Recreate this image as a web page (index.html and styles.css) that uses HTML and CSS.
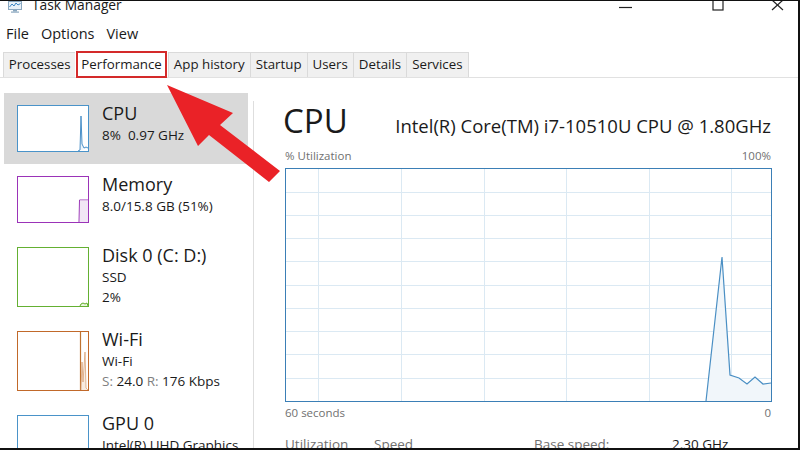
FILE: index.html
```html
<!DOCTYPE html>
<html>
<head>
<meta charset="utf-8">
<link rel="stylesheet" href="styles.css">
</head>
<body>
<div class="window">
  <div class="titlebar">
    <svg class="appicon" width="14" height="12" viewBox="0 0 14 12"><rect x="0.5" y="0.5" width="13" height="8" fill="#e8f1f8" stroke="#8aa7bf"/><polyline points="1.5,6 4,3 6,5 8,2 10,4 12.5,2.5" fill="none" stroke="#3b86c4" stroke-width="1"/><rect x="5" y="9" width="4" height="1.5" fill="#8aa7bf"/><rect x="3" y="10.5" width="8" height="1.2" fill="#8aa7bf"/></svg>
    <span class="title">Task Manager</span>
    <div class="controls">
      <span class="ctl min"><svg width="13" height="10" viewBox="0 0 13 10"><line x1="0" y1="6.5" x2="13" y2="6.5" stroke="#222" stroke-width="1.2"/></svg></span>
      <span class="ctl max"><svg width="12" height="12" viewBox="0 0 12 12"><rect x="1" y="-2" width="10" height="11" fill="none" stroke="#222" stroke-width="1.2"/></svg></span>
      <span class="ctl close"><svg width="14" height="10" viewBox="0 0 14 10"><line x1="1" y1="-1" x2="12" y2="9" stroke="#222" stroke-width="1.2"/><line x1="12" y1="-1" x2="1" y2="9" stroke="#222" stroke-width="1.2"/></svg></span>
    </div>
  </div>
  <div class="menubar">
    <span class="menu">File</span>
    <span class="menu">Options</span>
    <span class="menu">View</span>
  </div>
  <div class="tabs">
    <span class="tab">Processes</span>
    <span class="tab active">Performance</span>
    <span class="tab">App history</span>
    <span class="tab">Startup</span>
    <span class="tab">Users</span>
    <span class="tab">Details</span>
    <span class="tab">Services</span>
  </div>
  <div class="content">
    <div class="sidebar">
      <div class="item selected">
        <div class="thumb cpu short">
          <svg viewBox="0 0 70 45" preserveAspectRatio="none"><polyline points="60,45 62,44 63,10 64,38 66,42 68,41 70,42" fill="#eef5fb" stroke="#4a90c8" stroke-width="1"/></svg>
        </div>
        <div class="info">
          <div class="name">CPU</div>
          <div class="sub">8%&nbsp; 0.97 GHz</div>
        </div>
      </div>
      <div class="item">
        <div class="thumb mem short">
          <svg viewBox="0 0 70 45" preserveAspectRatio="none"><polyline points="61,45 61.5,23 70,23" fill="none" stroke="#9c3ab8" stroke-width="1"/><rect x="62" y="23.5" width="8" height="21.5" fill="#f1e6f5"/></svg>
        </div>
        <div class="info">
          <div class="name">Memory</div>
          <div class="sub">8.0/15.8 GB (51%)</div>
        </div>
      </div>
      <div class="item">
        <div class="thumb disk">
          <svg viewBox="0 0 70 58" preserveAspectRatio="none"><polyline points="62,58 63,56 65,55 67,56 69,55 70,58" fill="#e9f5df" stroke="#60ad28" stroke-width="1"/></svg>
        </div>
        <div class="info">
          <div class="name">Disk 0 (C: D:)</div>
          <div class="sub">SSD</div>
          <div class="sub">2%</div>
        </div>
      </div>
      <div class="item">
        <div class="thumb wifi">
          <svg viewBox="0 0 70 58" preserveAspectRatio="none"><line x1="62.5" y1="0" x2="62.5" y2="58" stroke="#c0722f" stroke-width="1.2"/><polyline points="63,58 64,30 65,50 67,20 68,56 70,58" fill="#f8ebe0" stroke="#d9a37a" stroke-width="0.8"/></svg>
        </div>
        <div class="info">
          <div class="name">Wi-Fi</div>
          <div class="sub">Wi-Fi</div>
          <div class="sub"><span class="dim">S:</span> 24.0 <span class="dim">R:</span> 176 Kbps</div>
        </div>
      </div>
      <div class="item">
        <div class="thumb gpu"></div>
        <div class="info">
          <div class="name">GPU 0</div>
          <div class="sub">Intel(R) UHD Graphics</div>
        </div>
      </div>
    </div>
    <div class="divider"></div>
    <div class="main">
      <div class="header">
        <span class="big">CPU</span>
        <span class="model">Intel(R) Core(TM) i7-10510U CPU @ 1.80GHz</span>
      </div>
      <div class="axis top"><span>% Utilization</span><span>100%</span></div>
      <div class="graph">
        <svg width="485" height="232" viewBox="0 0 485 232">
          <g stroke="#dbe9f3" stroke-width="1">
            <line x1="32.5" y1="0" x2="32.5" y2="232"/>
            <line x1="115.5" y1="0" x2="115.5" y2="232"/>
            <line x1="198.5" y1="0" x2="198.5" y2="232"/>
            <line x1="280.5" y1="0" x2="280.5" y2="232"/>
            <line x1="363.5" y1="0" x2="363.5" y2="232"/>
            <line x1="445.5" y1="0" x2="445.5" y2="232"/>
            <line x1="0" y1="23.5" x2="485" y2="23.5"/>
            <line x1="0" y1="46.5" x2="485" y2="46.5"/>
            <line x1="0" y1="69.5" x2="485" y2="69.5"/>
            <line x1="0" y1="92.5" x2="485" y2="92.5"/>
            <line x1="0" y1="116.5" x2="485" y2="116.5"/>
            <line x1="0" y1="139.5" x2="485" y2="139.5"/>
            <line x1="0" y1="162.5" x2="485" y2="162.5"/>
            <line x1="0" y1="185.5" x2="485" y2="185.5"/>
            <line x1="0" y1="209.5" x2="485" y2="209.5"/>
          </g>
          <polygon points="420,232 436,88 444,206 453,209 461,215 469,208 477,215 485,214 485,232" fill="#f1f6fa"/>
          <polyline points="420,232 436,88 444,206 453,209 461,215 469,208 477,215 485,214" fill="none" stroke="#4a8fc4" stroke-width="1.2"/>
        </svg>
      </div>
      <div class="axis bottom"><span>60 seconds</span><span>0</span></div>
      <div class="stats">
        <span class="lbl l1">Utilization</span>
        <span class="lbl l2">Speed</span>
        <span class="lbl l3">Base speed:</span>
        <span class="val">2.30 GHz</span>
      </div>
    </div>
  </div>
  <svg class="arrow" width="800" height="450" viewBox="0 0 800 450">
    <polygon points="167,85 233,113 220,125 280,171 269,182 209,135 198,146" fill="#ea2227"/>
  </svg>
</div>
</body>
</html>
```
FILE: styles.css
```css
* { box-sizing: border-box; }
html, body { margin: 0; padding: 0; }
body {
  width: 800px;
  height: 450px;
  overflow: hidden;
  background: #fff;
  font-family: "Open Sans", "Noto Sans", sans-serif;
  color: #1a1a1a;
}
.window {
  position: relative;
  width: 800px;
  height: 450px;
  overflow: hidden;
  border-top: 1px solid #111;
  border-right: 2px solid #111;
  border-bottom: 2px solid #111;
  display: flex;
  flex-direction: column;
}
.titlebar {
  height: 15px;
  display: flex;
  align-items: flex-end;
  padding-left: 8px;
  overflow: hidden;
  flex: none;
}
.appicon { margin-bottom: 3px; margin-right: 10px; display: block; }
.title { font-size: 13.8px; line-height: 20px; margin-bottom: 1px; }
.controls { margin-left: auto; display: flex; align-items: flex-start; height: 15px; align-self: flex-start; }
.ctl { display: block; }
.ctl svg { display: block; }
.ctl.min { margin-right: 80px; }
.ctl.max { margin-right: 47px; margin-top: 0; }
.ctl.close { margin-right: 13px; }

.menubar {
  height: 35px;
  display: flex;
  align-items: center;
  padding-left: 6px;
  gap: 12px;
  flex: none;
  padding-bottom: 1px;
}
.menu { font-size: 14.5px; }

.tabs {
  height: 27px;
  display: flex;
  align-items: flex-end;
  padding-left: 3px;
  border-bottom: 1px solid #e1e1e1;
  flex: none;
}
.tab {
  height: 25px;
  line-height: 23px;
  padding: 0 5px;
  font-size: 13.3px;
  background: #f0f0f0;
  border: 1px solid #dadada;
  border-right: none;
  border-bottom: none;
  color: #1a1a1a;
}
.tab:first-child { padding: 0 4.8px; }
.tab:last-child { border-right: 1px solid #dadada; }
.tab.active {
  height: 27px;
  line-height: 22px;
  background: #fff;
  border: 2px solid #d42a2a;
  margin: 0 1px -1px 1px;
  padding: 0 3px;
}
.tab.active + .tab { border-left: 1px solid #dadada; }

.content {
  flex: 1;
  display: flex;
  min-height: 0;
  overflow: hidden;
}
.sidebar {
  width: 253px;
  padding: 15px 0 0 4px;
  flex: none;
}
.item {
  display: flex;
  padding: 12px 0 12px 13px;
  width: 244px;
}
.item.selected { background: #d9d9d9; }
.thumb {
  width: 72px;
  height: 60px;
  border: 1.5px solid;
  background: #fff;
  flex: none;
}
.thumb.short { height: 47px; }
.thumb svg { display: block; width: 100%; height: 100%; }
.thumb.cpu { border-color: #4a93c9; }
.thumb.mem { border-color: #9b33b8; }
.thumb.disk { border-color: #64b032; }
.thumb.wifi { border-color: #c1692a; }
.thumb.gpu { border-color: #4a93c9; }
.info { margin-left: 13px; margin-top: -3px; }
.name { font-size: 18px; line-height: 23px; }
.sub { font-size: 13.5px; line-height: 20px; white-space: nowrap; }
.dim { color: #808080; }

.divider {
  width: 1px;
  background: #dedede;
  margin-top: 23px;
  flex: none;
}
.main {
  flex: 1;
  padding: 22px 27px 0 31px;
  display: flex;
  flex-direction: column;
  overflow: hidden;
}
.main > * { flex: none; }
.header {
  display: flex;
  justify-content: space-between;
  align-items: baseline;
  height: 44px;
}
.big { font-size: 33px; line-height: 42px; margin-left: -2px; }
.model { font-size: 18.5px; }
.axis {
  display: flex;
  justify-content: space-between;
  font-size: 11.5px;
  color: #707070;
}
.axis.top { height: 24px; line-height: 18px; padding-top: 3px; }
.axis.bottom { height: 32px; line-height: 22px; }
.graph {
  width: 487px;
  height: 234px;
  border: 1px solid #3b7fb6;
}
.graph svg { display: block; }
.stats {
  display: flex;
  font-size: 13.5px;
  line-height: 20px;
  color: #707070;
}
.l1 { width: 89px; }
.l2 { width: 160px; }
.l3 { width: 138px; }
.val { color: #1a1a1a; }

.arrow {
  position: absolute;
  left: 0;
  top: -1px;
  pointer-events: none;
}
```
